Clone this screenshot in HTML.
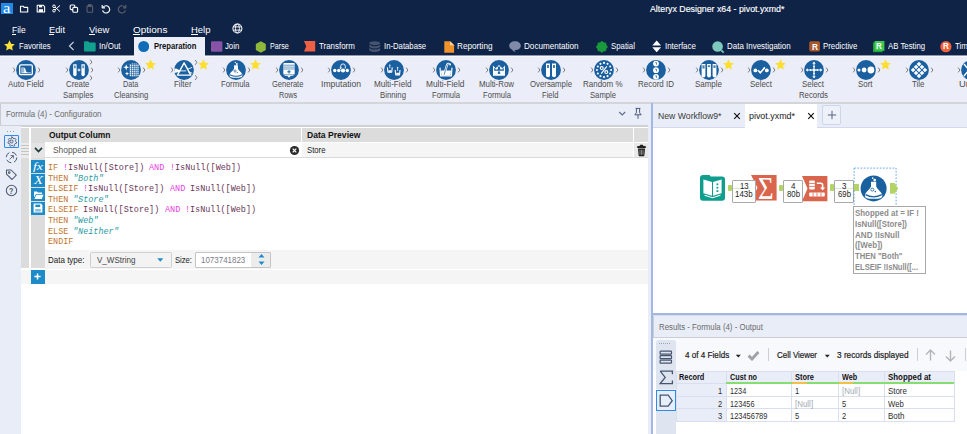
<!DOCTYPE html>
<html lang="en"><head><meta charset="utf-8"><title>Alteryx Designer x64 - pivot.yxmd*</title>
<style>
html,body{margin:0;padding:0;}
body{width:967px;height:434px;overflow:hidden;background:#fff;font-family:'Liberation Sans', sans-serif;}
#app{position:relative;width:967px;height:434px;overflow:hidden;background:#fff;}
#app div,#app svg,#app span.t{position:absolute;}
#app div{box-sizing:border-box;}
span.t{white-space:pre;line-height:1;transform-origin:0 50%;}
</style></head><body><div id="app">
<div style="left:0px;top:0px;width:967px;height:55px;background:#0f2347;"></div>
<div style="left:0px;top:55px;width:967px;height:48px;background:#ebeef9;"></div>
<div style="left:0px;top:55px;width:967px;height:1px;background:#8d97b0;"></div>
<div style="left:0px;top:56px;width:967px;height:1px;background:#f6f8fc;"></div>
<div style="left:134px;top:37px;width:71px;height:20px;background:#ebeef9;"></div>
<div style="left:1px;top:3px;width:12px;height:11px;background:#2389e6;"></div>
<span class="t" style="left:3.40px;top:1.80px;font-size:14px;color:#fff;font-family:'Liberation Serif', serif;transform:scaleX(1.1899);">a</span>
<svg style="left:19px;top:4px;" width="10" height="9" viewBox="0 0 10 9"><path d="M1.5 2.2h2.6l1 1.2h3.6v4.6h-7.2z" fill="none" stroke="#fff" stroke-width="1.1" stroke-linejoin="round"/></svg>
<svg style="left:35.5px;top:4px;" width="10" height="9" viewBox="0 0 10 9"><path d="M1.2 1.2h6l1.4 1.4v5.4h-7.4z" fill="none" stroke="#fff" stroke-width="1.1" stroke-linejoin="round"/><rect x="3" y="1.2" width="3.2" height="2.2" fill="#fff"/><rect x="2.8" y="5.2" width="4.2" height="2.8" fill="#fff"/></svg>
<svg style="left:51.5px;top:4px;" width="9" height="9" viewBox="0 0 9 9"><g fill="none" stroke="#fff" stroke-width="1"><circle cx="2" cy="2.3" r="1.3"/><circle cx="2" cy="6.7" r="1.3"/><path d="M3 3.1L8 7.6M3 5.9L8 1.4"/></g></svg>
<svg style="left:68.5px;top:4px;" width="10" height="9" viewBox="0 0 10 9"><g fill="none" stroke="#fff" stroke-width="1.1"><rect x="1.2" y="1" width="4.6" height="4.6" rx="1"/><rect x="3.8" y="3.4" width="4.8" height="4.8" rx="1" fill="#0f2347"/></g></svg>
<svg style="left:85.5px;top:4px;" width="8" height="9" viewBox="0 0 8 9"><g fill="none" stroke="#5d6168" stroke-width="1.1"><rect x="1" y="1.8" width="5.6" height="6.4" rx=".8"/><rect x="2.6" y=".7" width="2.4" height="1.6" fill="#5d6168"/></g></svg>
<svg style="left:100.5px;top:3.5px;" width="10" height="10" viewBox="0 0 10 10"><g fill="none" stroke="#fff" stroke-width="1.15"><path d="M2.2 3.2A3.6 3.6 0 1 1 1.6 6.4"/><path d="M1.2 1v2.8h2.8" stroke-linejoin="round"/></g></svg>
<svg style="left:117px;top:3.5px;" width="10" height="10" viewBox="0 0 10 10"><g fill="none" stroke="#5d6168" stroke-width="1.15"><path d="M7.8 3.2A3.6 3.6 0 1 0 8.4 6.4"/><path d="M8.8 1v2.8h-2.8" stroke-linejoin="round"/></g></svg>
<span class="t" style="left:649.60px;top:4.10px;font-size:9.4px;color:#fff;transform:scaleX(0.9380);-webkit-text-stroke:.15px #fff;">Alteryx Designer x64 - pivot.yxmd*</span>
<span class="t" style="left:11.80px;top:25.00px;font-size:9.6px;color:#fff;transform:scaleX(0.8857);">File</span>
<div style="left:11.8px;top:34px;width:4.2px;height:1px;background:#fff;"></div>
<span class="t" style="left:49.00px;top:25.00px;font-size:9.6px;color:#fff;transform:scaleX(0.9669);">Edit</span>
<div style="left:49px;top:34px;width:4.6px;height:1px;background:#fff;"></div>
<span class="t" style="left:88.70px;top:25.00px;font-size:9.6px;color:#fff;transform:scaleX(0.9794);">View</span>
<div style="left:88.7px;top:34px;width:6px;height:1px;background:#fff;"></div>
<span class="t" style="left:133.00px;top:25.00px;font-size:9.6px;color:#fff;transform:scaleX(1.0400);">Options</span>
<div style="left:133px;top:34px;width:7px;height:1px;background:#fff;"></div>
<span class="t" style="left:191.20px;top:25.00px;font-size:9.6px;color:#fff;transform:scaleX(0.9831);">Help</span>
<div style="left:191.2px;top:34px;width:6.4px;height:1px;background:#fff;"></div>
<svg style="left:231.5px;top:23px;" width="11" height="11" viewBox="0 0 11 11"><g fill="none" stroke="#fff" stroke-width="1.05"><circle cx="5.4" cy="5.5" r="4.5"/><ellipse cx="5.4" cy="5.5" rx="2" ry="4.5" stroke-width=".9"/><path d="M1.3 3.9h8.2M1.3 7.1h8.200" stroke-width=".9"/></g></svg>
<svg style="left:4px;top:40px;" width="11" height="11" viewBox="0 0 11 11"><path d="M5.5 0.3l1.6 3.4 3.7.5-2.7 2.6.7 3.7-3.3-1.8-3.3 1.8.7-3.7L.2 4.2l3.7-.5z" fill="#fbe037"/></svg>
<span class="t" style="left:18.80px;top:41.70px;font-size:9.2px;color:#fff;transform:scaleX(0.8360);">Favorites</span>
<svg style="left:67.5px;top:41px;" width="7" height="10" viewBox="0 0 7 10"><path d="M5.6 1L1.4 5l4.2 4" fill="none" stroke="#c9cfdd" stroke-width="1.1"/></svg>
<svg style="left:84px;top:41px;" width="12" height="11" viewBox="0 0 12 11"><path d="M0 1.2q0-1 1-1h3.2l1.2 1.4h5.3q1 0 1 1v7q0 1-1 1h-9.700q-1 0-1-1z" fill="#12a08f"/></svg>
<span class="t" style="left:98.80px;top:41.70px;font-size:9.2px;color:#fff;transform:scaleX(0.8589);">In/Out</span>
<svg style="left:138px;top:41px;" width="11.4" height="11.4" viewBox="0 0 11.4 11.4"><circle cx="5.7" cy="5.5" r="5.5" fill="#0f6cb7"/></svg>
<span class="t" style="left:153.50px;top:41.70px;font-size:9.2px;color:#101010;font-weight:700;transform:scaleX(0.8304);">Preparation</span>
<svg style="left:210.5px;top:41px;" width="12" height="11" viewBox="0 0 12 11"><rect x="0" y="0.3" width="11.4" height="10.4" rx="1.2" fill="#8653a6"/></svg>
<span class="t" style="left:224.80px;top:41.70px;font-size:9.2px;color:#fff;transform:scaleX(0.8423);">Join</span>
<svg style="left:254.5px;top:40.5px;" width="12" height="12" viewBox="0 0 12 12"><path d="M5.8 .3l5 2.8v5.8l-5 2.8-5-2.800v-5.800z" fill="#8eb83a"/></svg>
<span class="t" style="left:269.60px;top:41.70px;font-size:9.2px;color:#fff;transform:scaleX(0.7828);">Parse</span>
<svg style="left:303.5px;top:41px;" width="12" height="11" viewBox="0 0 12 11"><path d="M0 0h11.200v10.600h-11.200l2.200-5.300z" fill="#ee5f43"/></svg>
<span class="t" style="left:318.50px;top:41.70px;font-size:9.2px;color:#fff;transform:scaleX(0.8620);">Transform</span>
<svg style="left:369px;top:40.5px;" width="12" height="12" viewBox="0 0 12 12"><g fill="#46546f"><ellipse cx="5.700" cy="2.200" rx="5.500" ry="2"/><path d="M.2 3.700q5.500 3 11 0v2.400q-5.500 3-11 0z"/><path d="M.2 7.100q5.500 3 11 0v2.400q-5.500 3-11 0z"/></g></svg>
<span class="t" style="left:383.90px;top:41.70px;font-size:9.2px;color:#fff;transform:scaleX(0.8409);">In-Database</span>
<svg style="left:443.5px;top:40.5px;" width="11" height="12" viewBox="0 0 11 12"><path d="M.3 .3h5.800l4 4v7.400h-9.800z" fill="#f0932d"/><path d="M6.100 .3v4h4z" fill="#fbd9a6"/></svg>
<span class="t" style="left:457.30px;top:41.70px;font-size:9.2px;color:#fff;transform:scaleX(0.8910);">Reporting</span>
<svg style="left:509px;top:41px;" width="13" height="11" viewBox="0 0 13 11"><path d="M6 .3c3.300 0 5.800 1.900 5.800 4.400s-2.500 4.400-5.800 4.400l-.6 0 1.300 1.700c-2.500-.2-3.300-1.300-3.600-2.200c-1.700-.800-2.900-2.200-2.900-3.900c0-2.500 2.500-4.400 5.800-4.400z" fill="#7f8ba8"/></svg>
<span class="t" style="left:524.10px;top:41.70px;font-size:9.2px;color:#fff;transform:scaleX(0.8835);">Documentation</span>
<svg style="left:595.5px;top:40.5px;" width="12" height="12" viewBox="0 0 12 12"><g fill="#1a983c"><rect x="1.500" y="1.500" width="8.800" height="8.800" rx="1.200"/><rect x="1.500" y="1.500" width="8.800" height="8.800" rx="1.200" transform="rotate(45 5.9 5.9)"/></g></svg>
<span class="t" style="left:610.50px;top:41.70px;font-size:9.2px;color:#fff;transform:scaleX(0.8507);">Spatial</span>
<svg style="left:652px;top:40px;" width="10" height="13" viewBox="0 0 10 13"><path d="M4.700 .5l4.400 5h-8.800z" fill="#fff"/><path d="M4.700 12.300l4.400-5h-8.800z" fill="#fff"/></svg>
<span class="t" style="left:664.80px;top:41.70px;font-size:9.2px;color:#fff;transform:scaleX(0.8643);">Interface</span>
<svg style="left:712px;top:40.5px;" width="13" height="13" viewBox="0 0 13 13"><circle cx="5.600" cy="5.500" r="5.300" fill="#7ec9be"/><path d="M9.300 9.300l2.400 2.400" stroke="#7ec9be" stroke-width="1.700"/></svg>
<span class="t" style="left:727.20px;top:41.70px;font-size:9.2px;color:#fff;transform:scaleX(0.8661);">Data Investigation</span>
<svg style="left:809px;top:41px;" width="12" height="11" viewBox="0 0 12 11"><rect x="0.200" y="0.200" width="10.800" height="10.400" rx="1.800" fill="#a8562a"/></svg>
<span class="t" style="left:811.60px;top:43.70px;font-size:8.2px;color:#fff;font-weight:700;transform:scaleX(1.0132);">R</span>
<span class="t" style="left:823.20px;top:41.70px;font-size:9.2px;color:#fff;transform:scaleX(0.8527);">Predictive</span>
<svg style="left:873px;top:40.5px;" width="12" height="12" viewBox="0 0 12 12"><rect x="0" y="1.400" width="9.600" height="9.800" fill="#1d9e3a"/><rect x="1.600" y="0" width="9.800" height="9.800" fill="#3ccb4e"/></svg>
<span class="t" style="left:876.40px;top:42.70px;font-size:8.2px;color:#fff;font-weight:700;transform:scaleX(0.9794);">R</span>
<span class="t" style="left:887.70px;top:41.70px;font-size:9.2px;color:#fff;transform:scaleX(0.8477);">AB Testing</span>
<svg style="left:940px;top:40.5px;" width="12" height="12" viewBox="0 0 12 12"><circle cx="5.900" cy="5.700" r="5.600" fill="#f0613c"/></svg>
<span class="t" style="left:943.10px;top:42.70px;font-size:8.2px;color:#fff;font-weight:700;transform:scaleX(0.9963);">R</span>
<span class="t" style="left:954.90px;top:41.70px;font-size:9.2px;color:#fff;transform:scaleX(0.8618);">Tim</span>
<svg style="left:8.1px;top:57.5px;" width="40" height="24" viewBox="0 0 40 24"><circle cx="18" cy="12" r="9.900" fill="#1a5f9f"/><g transform="translate(8,2)"><rect x="3.700" y="4.800" width="12.600" height="9.800" rx="1.200" fill="none" stroke="#fff" stroke-width="1.300"/><path d="M5.500 12.600v-5.200h2.200q1.600 0 1.900 2.400t1.600 2.600h3.600v.8h-9.300z" fill="#fff"/><path d="M6.600 7.500v5M7.700 7.500v5" stroke="#1a5f9f" stroke-width=".5"/></g><path d="M5.2 9.6l1.700 2.400-1.700 2.400" fill="none" stroke="#7d7d7d" stroke-width="1"/><path d="M30.2 9.6l1.700 2.400-1.700 2.400" fill="none" stroke="#7d7d7d" stroke-width="1"/></svg>
<span class="t" style="left:7.70px;top:79.70px;font-size:9.2px;color:#4c4c4c;transform:scaleX(0.8653);">Auto Field</span>
<svg style="left:60.6px;top:57.5px;" width="40" height="24" viewBox="0 0 40 24"><circle cx="18" cy="12" r="9.900" fill="#1a5f9f"/><g transform="translate(8,2)"><path d="M4.2 4.200h3.400v10.300a1.700 1.700 0 0 1-3.400 0z" fill="#fff"/><path d="M5.1000000000000005 5.600h1.600v2.600h-1.600z" fill="#1a5f9f" opacity=".75"/><path d="M12.4 4.200h3.400v10.300a1.700 1.700 0 0 1-3.400 0z" fill="#fff"/><path d="M13.3 5.600h1.600v2.600h-1.600z" fill="#1a5f9f" opacity=".75"/><path d="M8.600 10h2.800M10 8.600v2.800" stroke="#fff" stroke-width="1" fill="none"/></g><path d="M5.2 9.6l1.700 2.400-1.700 2.400" fill="none" stroke="#7d7d7d" stroke-width="1"/><path d="M29.2 1.6l1.700 2.400-1.700 2.400" fill="none" stroke="#7d7d7d" stroke-width="1"/><path d="M30.2 9.6l1.700 2.400-1.700 2.400" fill="none" stroke="#7d7d7d" stroke-width="1"/><path d="M29.2 17.6l1.700 2.400-1.700 2.400" fill="none" stroke="#7d7d7d" stroke-width="1"/></svg>
<span class="t" style="left:66.40px;top:79.70px;font-size:9.2px;color:#4c4c4c;transform:scaleX(0.8485);">Create</span>
<span class="t" style="left:62.90px;top:90.70px;font-size:9.2px;color:#4c4c4c;transform:scaleX(0.8503);">Samples</span>
<svg style="left:113.1px;top:57.5px;" width="40" height="24" viewBox="0 0 40 24"><circle cx="18" cy="12" r="9.900" fill="#1a5f9f"/><g transform="translate(8,2)"><path d="M9.4 4.1v12.2" stroke="#fff" stroke-width="1.200"/><path d="M11.3 3.6v13.2" stroke="#fff" stroke-width="1.200"/><path d="M13.2 3.6v13.2" stroke="#fff" stroke-width="1.200"/><path d="M15.1 3.6v13.2" stroke="#fff" stroke-width="1.200"/><path d="M17.0 4.1v12.2" stroke="#fff" stroke-width="1.200"/><path d="M9 4.6h9" stroke="#1a5f9f" stroke-width=".55"/><path d="M9 6.6h9" stroke="#1a5f9f" stroke-width=".55"/><path d="M9 8.6h9" stroke="#1a5f9f" stroke-width=".55"/><path d="M9 10.6h9" stroke="#1a5f9f" stroke-width=".55"/><path d="M9 12.6h9" stroke="#1a5f9f" stroke-width=".55"/><path d="M9 14.6h9" stroke="#1a5f9f" stroke-width=".55"/><path d="M9 16.6h9" stroke="#1a5f9f" stroke-width=".55"/><path d="M5.200 4.200l.8 2.300 2.300.8-2.300.8-.8 2.300-.8-2.300-2.300-.8 2.300-.8z" fill="#fff"/><path d="M6 11.600l.55 1.500 1.500.55-1.500.55-.55 1.500-.55-1.500-1.500-.55 1.500-.55z" fill="#fff"/></g><path d="M5.2 9.6l1.700 2.400-1.700 2.400" fill="none" stroke="#7d7d7d" stroke-width="1"/><path d="M30.2 9.6l1.700 2.400-1.700 2.400" fill="none" stroke="#7d7d7d" stroke-width="1"/></svg>
<svg style="left:145.3px;top:59px;" width="11" height="11" viewBox="0 0 11 11"><path d="M5.5 0.3l1.6 3.4 3.7.5-2.7 2.6.7 3.7-3.3-1.8-3.3 1.8.7-3.7L.2 4.2l3.7-.5z" fill="#fbde2e"/></svg>
<span class="t" style="left:123.00px;top:79.70px;font-size:9.2px;color:#4c4c4c;transform:scaleX(0.7826);">Data</span>
<span class="t" style="left:113.50px;top:90.70px;font-size:9.2px;color:#4c4c4c;transform:scaleX(0.8370);">Cleansing</span>
<svg style="left:165.6px;top:57.5px;" width="40" height="24" viewBox="0 0 40 24"><circle cx="18" cy="12" r="9.900" fill="#1a5f9f"/><g transform="translate(8,2)"><path d="M10.100 2.800l6.700 12.300h-13.400z" fill="none" stroke="#fff" stroke-width="1.400" stroke-linejoin="round"/><path d="M.3 8.600l2.400.1 3 1.500v1.500l-3 .9-2.400.4z" fill="#fff"/><path d="M5.600 10.900h6.600M13.200 9.300l5-1.900M14 11.700l4.300 1.500" stroke="#fff" stroke-width=".9"/></g><path d="M5.2 9.6l1.700 2.400-1.700 2.400" fill="none" stroke="#7d7d7d" stroke-width="1"/><path d="M29.2 2.0000000000000004l1.700 2.400-1.700 2.400" fill="none" stroke="#7d7d7d" stroke-width="1"/><path d="M29.2 17.200000000000003l1.700 2.400-1.700 2.400" fill="none" stroke="#7d7d7d" stroke-width="1"/></svg>
<svg style="left:197.8px;top:59px;" width="11" height="11" viewBox="0 0 11 11"><path d="M5.5 0.3l1.6 3.4 3.7.5-2.7 2.6.7 3.7-3.3-1.8-3.3 1.8.7-3.7L.2 4.2l3.7-.5z" fill="#fbde2e"/></svg>
<span class="t" style="left:174.30px;top:79.70px;font-size:9.2px;color:#4c4c4c;transform:scaleX(0.8618);">Filter</span>
<svg style="left:218.1px;top:57.5px;" width="40" height="24" viewBox="0 0 40 24"><circle cx="18" cy="12" r="9.900" fill="#1a5f9f"/><g transform="translate(8,2)"><g transform="translate(10,10.100) scale(.74)"><path d="M-2.600 -6.600h5.200v4.600C3.600 1 8.700 3.800 8.700 7C8.700 9.600 6 10.400 0 10.400C-6 10.400 -8.700 9.600 -8.700 7C-8.700 3.800 -3.600 1 -2.600 -2z" fill="#fff"/><path d="M-7.900 5.700q7.900 4.200 15.800 0l.5 1.100q-8.400 4.400-16.800 0z" fill="#1a5f9f"/><circle cx="-1.300" cy="1.200" r="1.500" fill="none" stroke="#1a5f9f" stroke-width=".9"/><circle cx="1.700" cy="3.200" r=".8" fill="#1a5f9f"/><circle cx="1.100" cy="-8.300" r="1.300" fill="#fff"/><circle cx="-.9" cy="-10.300" r=".85" fill="#fff"/></g></g><path d="M5.2 9.6l1.700 2.400-1.700 2.400" fill="none" stroke="#7d7d7d" stroke-width="1"/><path d="M30.2 9.6l1.700 2.400-1.700 2.400" fill="none" stroke="#7d7d7d" stroke-width="1"/></svg>
<svg style="left:250.3px;top:59px;" width="11" height="11" viewBox="0 0 11 11"><path d="M5.5 0.3l1.6 3.4 3.7.5-2.7 2.6.7 3.7-3.3-1.8-3.3 1.8.7-3.7L.2 4.2l3.7-.5z" fill="#fbde2e"/></svg>
<span class="t" style="left:221.30px;top:79.70px;font-size:9.2px;color:#4c4c4c;transform:scaleX(0.8486);">Formula</span>
<svg style="left:270.6px;top:57.5px;" width="40" height="24" viewBox="0 0 40 24"><circle cx="18" cy="12" r="9.900" fill="#1a5f9f"/><g transform="translate(8,2)"><rect x="4.300" y="3" width="11.400" height="11.600" rx=".9" fill="#fff"/><path d="M4.300 5.200h11.400M4.300 7.100h11.400M4.300 9h11.400" stroke="#1a5f9f" stroke-width=".65"/><path d="M8.300 11.800h3.400M10 10.100v3.400" stroke="#1a5f9f" stroke-width="1"/><path d="M7.900 15.400h4.200l-2.100 2.300z" fill="#fff"/><path d="M5.600 15.400h8.800" stroke="#fff" stroke-width=".8"/></g><path d="M5.2 9.6l1.700 2.400-1.700 2.400" fill="none" stroke="#7d7d7d" stroke-width="1"/><path d="M30.2 9.6l1.700 2.400-1.700 2.400" fill="none" stroke="#7d7d7d" stroke-width="1"/></svg>
<span class="t" style="left:272.40px;top:79.70px;font-size:9.2px;color:#4c4c4c;transform:scaleX(0.8196);">Generate</span>
<span class="t" style="left:279.10px;top:90.70px;font-size:9.2px;color:#4c4c4c;transform:scaleX(0.7831);">Rows</span>
<svg style="left:323.1px;top:57.5px;" width="40" height="24" viewBox="0 0 40 24"><circle cx="18" cy="12" r="9.900" fill="#1a5f9f"/><g transform="translate(8,2)"><circle cx="3.800" cy="10.500" r="1.700" fill="#fff"/><circle cx="7.800" cy="10.500" r="1.700" fill="#fff"/><circle cx="12" cy="10.500" r="2.100" fill="#fff"/><circle cx="16.300" cy="10.500" r="1.700" fill="#fff"/><path d="M9.700 8.600v-2.400a2.300 2.300 0 0 1 4.600 0v2.400" fill="none" stroke="#fff" stroke-width=".9"/><path d="M8.500 7.600l1.200 1.700 1.200-1.700z" fill="#fff"/></g><path d="M5.2 9.6l1.700 2.400-1.700 2.400" fill="none" stroke="#7d7d7d" stroke-width="1"/><path d="M30.2 9.6l1.700 2.400-1.700 2.400" fill="none" stroke="#7d7d7d" stroke-width="1"/></svg>
<span class="t" style="left:320.60px;top:79.70px;font-size:9.2px;color:#4c4c4c;transform:scaleX(0.9323);">Imputation</span>
<svg style="left:375.6px;top:57.5px;" width="40" height="24" viewBox="0 0 40 24"><circle cx="18" cy="12" r="9.900" fill="#1a5f9f"/><g transform="translate(8,2)"><path d="M3.4 7.4l0.525 4.83h3.7800000000000002l0.525-4.83" fill="none" stroke="#fff" stroke-width="1.100" stroke-linejoin="round"/><path d="M4.345 10.13h2.94l-0.315 2.1h-2.3100000000000005z" fill="#fff"/><path d="M5.8149999999999995 5.09v3.1500000000000004" stroke="#fff" stroke-width=".8"/><path d="M4.765000000000001 5.51l1.05-1.26 1.05 1.26z" fill="#fff"/><path d="M11.2 10l0.525 4.83h3.7800000000000002l0.525-4.83" fill="none" stroke="#fff" stroke-width="1.100" stroke-linejoin="round"/><path d="M12.145 12.73h2.94l-0.315 2.1h-2.3100000000000005z" fill="#fff"/><path d="M13.614999999999998 7.6899999999999995v3.1500000000000004" stroke="#fff" stroke-width=".8"/><path d="M12.565 8.11l1.05-1.26 1.05 1.26z" fill="#fff"/></g><path d="M5.2 9.6l1.700 2.400-1.700 2.400" fill="none" stroke="#7d7d7d" stroke-width="1"/><path d="M30.2 9.6l1.700 2.400-1.700 2.400" fill="none" stroke="#7d7d7d" stroke-width="1"/></svg>
<span class="t" style="left:374.35px;top:79.70px;font-size:9.2px;color:#4c4c4c;transform:scaleX(0.8850);">Multi-Field</span>
<span class="t" style="left:380.10px;top:90.70px;font-size:9.2px;color:#4c4c4c;transform:scaleX(0.8481);">Binning</span>
<svg style="left:428.1px;top:57.5px;" width="40" height="24" viewBox="0 0 40 24"><circle cx="18" cy="12" r="9.900" fill="#1a5f9f"/><g transform="translate(8,2)"><path d="M4 7.600l.6 8.200h10.800l.6-8.200" fill="none" stroke="#fff" stroke-width="1.200"/><path d="M5 10.500h10l-.4 5h-9.200z" fill="#fff"/><path d="M8.200 14.400l2.600-8.800q.8-2.400 2.600-1.600l.6.500" fill="none" stroke="#fff" stroke-width="2.100" stroke-linecap="round"/><path d="M8.200 14.400l2.600-8.800q.8-2.400 2.600-1.600" fill="none" stroke="#1a5f9f" stroke-width=".7" stroke-linecap="round"/></g><path d="M5.2 9.6l1.700 2.400-1.700 2.400" fill="none" stroke="#7d7d7d" stroke-width="1"/><path d="M30.2 9.6l1.700 2.400-1.700 2.400" fill="none" stroke="#7d7d7d" stroke-width="1"/></svg>
<span class="t" style="left:426.35px;top:79.70px;font-size:9.2px;color:#4c4c4c;transform:scaleX(0.9086);">Multi-Field</span>
<span class="t" style="left:431.60px;top:90.70px;font-size:9.2px;color:#4c4c4c;transform:scaleX(0.8308);">Formula</span>
<svg style="left:480.6px;top:57.5px;" width="40" height="24" viewBox="0 0 40 24"><circle cx="18" cy="12" r="9.900" fill="#1a5f9f"/><g transform="translate(8,2)"><path d="M4 15.800v-10.400l3 3.400 3-4 3 4 3-3.400v10.400z" fill="#fff"/><path d="M5.200 10.800v-3l1.800 2 3-3.900 3 3.900 1.800-2v3z" fill="#1a5f9f"/><path d="M8 6.600l.9 1.600a.95.95 0 1 1-1.800 0zM12 6.600l.9 1.600a.95.95 0 1 1-1.800 0z" fill="#fff"/><path d="M10 10.400l1.100 2a1.200 1.200 0 1 1-2.200 0z" fill="#1a5f9f"/></g><path d="M5.2 9.6l1.700 2.400-1.700 2.400" fill="none" stroke="#7d7d7d" stroke-width="1"/><path d="M30.2 9.6l1.700 2.400-1.700 2.400" fill="none" stroke="#7d7d7d" stroke-width="1"/></svg>
<span class="t" style="left:479.10px;top:79.70px;font-size:9.2px;color:#4c4c4c;transform:scaleX(0.8569);">Multi-Row</span>
<span class="t" style="left:482.60px;top:90.70px;font-size:9.2px;color:#4c4c4c;transform:scaleX(0.8308);">Formula</span>
<svg style="left:533.1px;top:57.5px;" width="40" height="24" viewBox="0 0 40 24"><circle cx="18" cy="12" r="9.900" fill="#1a5f9f"/><g transform="translate(8,2)"><path d="M5 3.600h4v11.600a2 2 0 0 1-4 0z" fill="#fff"/><path d="M6 5h2v3h-2z" fill="#1a5f9f" opacity=".8"/><path d="M11 3.600h4v11.600a2 2 0 0 1-4 0z" fill="#fff"/><path d="M12 5h2v3h-2z" fill="#1a5f9f" opacity=".8"/></g><path d="M5.2 9.6l1.700 2.400-1.700 2.400" fill="none" stroke="#7d7d7d" stroke-width="1"/><path d="M30.2 9.6l1.700 2.400-1.700 2.400" fill="none" stroke="#7d7d7d" stroke-width="1"/></svg>
<span class="t" style="left:529.60px;top:79.70px;font-size:9.2px;color:#4c4c4c;transform:scaleX(0.8479);">Oversample</span>
<span class="t" style="left:542.35px;top:90.70px;font-size:9.2px;color:#4c4c4c;transform:scaleX(0.8282);">Field</span>
<svg style="left:585.6px;top:57.5px;" width="40" height="24" viewBox="0 0 40 24"><circle cx="18" cy="12" r="9.900" fill="#1a5f9f"/><g transform="translate(8,2)"><circle cx="17.10" cy="10.00" r="1.050" fill="#fff"/><circle cx="16.15" cy="13.55" r="1.050" fill="#fff"/><circle cx="13.55" cy="16.15" r="1.050" fill="#fff"/><circle cx="10.00" cy="17.10" r="1.050" fill="#fff"/><circle cx="6.45" cy="16.15" r="1.050" fill="#fff"/><circle cx="3.85" cy="13.55" r="1.050" fill="#fff"/><circle cx="2.90" cy="10.00" r="1.050" fill="#fff"/><circle cx="3.85" cy="6.45" r="1.050" fill="#fff"/><circle cx="6.45" cy="3.85" r="1.050" fill="#fff"/><circle cx="10.00" cy="2.90" r="1.050" fill="#fff"/><circle cx="13.55" cy="3.85" r="1.050" fill="#fff"/><circle cx="16.15" cy="6.45" r="1.050" fill="#fff"/><g stroke="#fff" fill="none" stroke-width="1.150"><circle cx="7.700" cy="8" r="1.450"/><circle cx="12.300" cy="12" r="1.450"/><path d="M12.800 6.400l-5.600 7.200"/></g></g><path d="M5.2 9.6l1.700 2.400-1.700 2.400" fill="none" stroke="#7d7d7d" stroke-width="1"/><path d="M30.2 9.6l1.700 2.400-1.700 2.400" fill="none" stroke="#7d7d7d" stroke-width="1"/></svg>
<span class="t" style="left:583.35px;top:79.70px;font-size:9.2px;color:#4c4c4c;transform:scaleX(0.8690);">Random %</span>
<span class="t" style="left:590.10px;top:90.70px;font-size:9.2px;color:#4c4c4c;transform:scaleX(0.8345);">Sample</span>
<svg style="left:638.1px;top:57.5px;" width="40" height="24" viewBox="0 0 40 24"><circle cx="18" cy="12" r="9.900" fill="#1a5f9f"/><g transform="translate(8,2)"><circle cx="10" cy="3.6" r="2.900" fill="#fff"/><path d="M9.200 2.7h1.300v2" stroke="#1a5f9f" stroke-width=".7" fill="none"/><circle cx="10" cy="10.2" r="2.900" fill="#fff"/><path d="M9.200 9.3h1.300v2" stroke="#1a5f9f" stroke-width=".7" fill="none"/><circle cx="10" cy="16.8" r="2.900" fill="#fff"/><path d="M9.200 15.899999999999999h1.300v2" stroke="#1a5f9f" stroke-width=".7" fill="none"/></g><path d="M5.2 9.6l1.700 2.400-1.700 2.400" fill="none" stroke="#7d7d7d" stroke-width="1"/><path d="M30.2 9.6l1.700 2.400-1.700 2.400" fill="none" stroke="#7d7d7d" stroke-width="1"/></svg>
<span class="t" style="left:637.60px;top:79.70px;font-size:9.2px;color:#4c4c4c;transform:scaleX(0.8704);">Record ID</span>
<svg style="left:690.6px;top:57.5px;" width="40" height="24" viewBox="0 0 40 24"><circle cx="18" cy="12" r="9.900" fill="#1a5f9f"/><g transform="translate(8,2)"><path d="M2.6 4h3.800v11.600a1.900 1.900 0 0 1-3.800 0z" fill="#fff"/><path d="M3.4000000000000004 5.300h2.200v3.2h-2.200z" fill="#1a5f9f" opacity=".8"/><path d="M8.1 4h3.800v11.600a1.900 1.900 0 0 1-3.800 0z" fill="#fff"/><path d="M8.9 5.300h2.200v1.8h-2.200z" fill="#1a5f9f" opacity=".8"/><path d="M13.6 4h3.800v11.600a1.900 1.900 0 0 1-3.800 0z" fill="#fff"/><path d="M14.4 5.300h2.200v2.6h-2.200z" fill="#1a5f9f" opacity=".8"/></g><path d="M5.2 9.6l1.700 2.400-1.700 2.400" fill="none" stroke="#7d7d7d" stroke-width="1"/><path d="M30.2 9.6l1.700 2.400-1.700 2.400" fill="none" stroke="#7d7d7d" stroke-width="1"/></svg>
<svg style="left:722.8px;top:59px;" width="11" height="11" viewBox="0 0 11 11"><path d="M5.5 0.3l1.6 3.4 3.7.5-2.7 2.6.7 3.7-3.3-1.8-3.3 1.8.7-3.7L.2 4.2l3.7-.5z" fill="#fbde2e"/></svg>
<span class="t" style="left:694.60px;top:79.70px;font-size:9.2px;color:#4c4c4c;transform:scaleX(0.8666);">Sample</span>
<svg style="left:743.1px;top:57.5px;" width="40" height="24" viewBox="0 0 40 24"><circle cx="18" cy="12" r="9.900" fill="#1a5f9f"/><g transform="translate(8,2)"><circle cx="4.400" cy="10.400" r="1.900" fill="#fff"/><circle cx="15.800" cy="10.400" r="1.900" fill="#fff"/><path d="M7 10.200l2.300 2.600 4.600-5.400" fill="none" stroke="#fff" stroke-width="1.700"/></g><path d="M5.2 9.6l1.700 2.400-1.700 2.400" fill="none" stroke="#7d7d7d" stroke-width="1"/><path d="M30.2 9.6l1.700 2.400-1.700 2.400" fill="none" stroke="#7d7d7d" stroke-width="1"/></svg>
<svg style="left:775.3px;top:59px;" width="11" height="11" viewBox="0 0 11 11"><path d="M5.5 0.3l1.6 3.4 3.7.5-2.7 2.6.7 3.7-3.3-1.8-3.3 1.8.7-3.7L.2 4.2l3.7-.5z" fill="#fbde2e"/></svg>
<span class="t" style="left:749.60px;top:79.70px;font-size:9.2px;color:#4c4c4c;transform:scaleX(0.8612);">Select</span>
<svg style="left:795.6px;top:57.5px;" width="40" height="24" viewBox="0 0 40 24"><circle cx="18" cy="12" r="9.900" fill="#1a5f9f"/><g transform="translate(8,2)"><path d="M10 3v14M3 10h14" stroke="#fff" stroke-width="1"/><path d="M10 1.600l1.700 2.200h-3.400zM10 18.400l1.700-2.200h-3.400zM1.600 10l2.200-1.700v3.400zM18.400 10l-2.200-1.700v3.400z" fill="#fff"/><circle cx="10" cy="10" r="1.500" fill="#fff"/><circle cx="6.600" cy="10" r=".9" fill="#fff"/><circle cx="13.400" cy="10" r=".9" fill="#fff"/><circle cx="10" cy="6.600" r=".9" fill="#fff"/><circle cx="10" cy="13.400" r=".9" fill="#fff"/></g><path d="M5.2 9.6l1.700 2.400-1.700 2.400" fill="none" stroke="#7d7d7d" stroke-width="1"/><path d="M30.2 9.6l1.700 2.400-1.700 2.400" fill="none" stroke="#7d7d7d" stroke-width="1"/></svg>
<span class="t" style="left:802.10px;top:79.70px;font-size:9.2px;color:#4c4c4c;transform:scaleX(0.8612);">Select</span>
<span class="t" style="left:798.60px;top:90.70px;font-size:9.2px;color:#4c4c4c;transform:scaleX(0.8475);">Records</span>
<svg style="left:848.1px;top:57.5px;" width="40" height="24" viewBox="0 0 40 24"><circle cx="18" cy="12" r="9.900" fill="#1a5f9f"/><g transform="translate(8,2)"><circle cx="3" cy="10" r="1.500" fill="#fff"/><circle cx="8.100" cy="10" r="2.400" fill="#fff"/><circle cx="14.900" cy="10" r="3.400" fill="#fff"/></g><path d="M5.2 9.6l1.700 2.400-1.700 2.400" fill="none" stroke="#7d7d7d" stroke-width="1"/><path d="M30.2 9.6l1.700 2.400-1.700 2.400" fill="none" stroke="#7d7d7d" stroke-width="1"/></svg>
<svg style="left:880.3px;top:59px;" width="11" height="11" viewBox="0 0 11 11"><path d="M5.5 0.3l1.6 3.4 3.7.5-2.7 2.6.7 3.7-3.3-1.8-3.3 1.8.7-3.7L.2 4.2l3.7-.5z" fill="#fbde2e"/></svg>
<span class="t" style="left:858.35px;top:79.70px;font-size:9.2px;color:#4c4c4c;transform:scaleX(0.8601);">Sort</span>
<svg style="left:900.6px;top:57.5px;" width="40" height="24" viewBox="0 0 40 24"><circle cx="18" cy="12" r="9.900" fill="#1a5f9f"/><g transform="translate(8,2)"><path d="M10.00 1.80l2.300 2.300-2.300 2.300-2.300-2.300z" fill="#fff"/><path d="M7.05 4.75l2.300 2.300-2.300 2.300-2.300-2.300z" fill="#fff"/><path d="M4.10 7.70l2.300 2.300-2.300 2.300-2.300-2.300z" fill="#fff"/><path d="M12.95 4.75l2.300 2.300-2.300 2.300-2.300-2.300z" fill="#fff"/><path d="M10.00 7.70l2.300 2.300-2.300 2.300-2.300-2.300z" fill="#fff"/><path d="M7.05 10.65l2.300 2.300-2.300 2.300-2.300-2.300z" fill="#fff"/><path d="M15.90 7.70l2.300 2.300-2.300 2.300-2.300-2.300z" fill="#fff"/><path d="M12.95 10.65l2.300 2.300-2.300 2.300-2.300-2.300z" fill="#fff"/><path d="M10.00 13.60l2.300 2.300-2.300 2.300-2.300-2.300z" fill="#fff"/></g><path d="M5.2 9.6l1.700 2.400-1.700 2.400" fill="none" stroke="#7d7d7d" stroke-width="1"/><path d="M30.2 9.6l1.700 2.400-1.700 2.400" fill="none" stroke="#7d7d7d" stroke-width="1"/></svg>
<span class="t" style="left:911.85px;top:79.70px;font-size:9.2px;color:#4c4c4c;transform:scaleX(0.8639);">Tile</span>
<svg style="left:953.1px;top:57.5px;" width="40" height="24" viewBox="0 0 40 24"><circle cx="18" cy="12" r="9.900" fill="#1a5f9f"/><g transform="translate(8,2)"><path d="M3 4l5 6-5 6M7 4l5 6-5 6" fill="none" stroke="#fff" stroke-width="1.400"/></g><path d="M5.2 9.6l1.700 2.400-1.700 2.400" fill="none" stroke="#7d7d7d" stroke-width="1"/><path d="M30.2 9.6l1.700 2.400-1.700 2.400" fill="none" stroke="#7d7d7d" stroke-width="1"/></svg>
<span class="t" style="left:958.60px;top:79.70px;font-size:9.2px;color:#4c4c4c;transform:scaleX(1.0213);">Un</span>
<div style="left:0px;top:102.4px;width:967px;height:1.6px;background:#d4d5d9;"></div>
<div style="left:0px;top:104px;width:648px;height:330px;background:#ffffff;"></div>
<div style="left:0px;top:104px;width:650px;height:21px;background:#e9edf8;border-left:1.5px solid #c9cacd;border-right:1px solid #cfd0d4;"></div>
<div style="left:0px;top:125px;width:650px;height:1.5px;background:#d0d1d4;"></div>
<span class="t" style="left:6.00px;top:109.70px;font-size:9.2px;color:#6a6a6a;transform:scaleX(0.8658);">Formula (4) - Configuration</span>
<svg style="left:618px;top:110px;" width="9" height="8" viewBox="0 0 9 8"><path d="M1.200 2l3 3 3-3" fill="none" stroke="#5a6b8a" stroke-width="1.100"/></svg>
<svg style="left:633px;top:106.5px;" width="10" height="14" viewBox="0 0 10 14"><g fill="none" stroke="#4a5b7d" stroke-width="1"><path d="M2.600 1.400h4.800M3.400 1.400v4.400l-1.600 2h6.400l-1.600-2v-4.400M5 7.800v4"/></g></svg>
<div style="left:0px;top:126px;width:20.5px;height:308px;background:#e9edf8;"></div>
<div style="left:7px;top:130.5px;width:1.2px;height:1px;background:#9a9a9a;"></div>
<div style="left:10px;top:130.5px;width:1.2px;height:1px;background:#9a9a9a;"></div>
<div style="left:13px;top:130.5px;width:1.2px;height:1px;background:#9a9a9a;"></div>
<div style="left:3.8px;top:134.6px;width:15.4px;height:13.8px;background:#e3ebfa;border:1px solid #2f8be6;border-radius:1px;"></div>
<svg style="left:5.9px;top:136px;" width="11" height="11" viewBox="0 0 11 11"><g fill="none" stroke="#4d5b70" stroke-width="1"><circle cx="5.500" cy="5.500" r="1.500"/><path d="M5.500 .8l1 .2.400 1.200 1.100.600 1.200-.400.800 1-.600 1.100.300 1 .9.600-.300 1.300-1.200.200-.600.900.300 1.200-1.100.600-.9-.800h-1.100l-.9.800-1.100-.600.300-1.200-.600-.9-1.200-.200-.300-1.300.9-.600.300-1-.600-1.100.800-1 1.200.400 1.100-.600.400-1.200z" stroke-width=".9"/></g></svg>
<svg style="left:4.9px;top:151px;" width="13" height="13" viewBox="0 0 13 13"><g fill="none" stroke="#4d5b70" stroke-width="1"><circle cx="6.500" cy="6.500" r="5.300" stroke-dasharray="5.500 2.800"/><path d="M4.600 8.400l3.600-3.600M5.600 4.600h2.800v2.800" stroke-width=".9"/></g></svg>
<svg style="left:5px;top:167.7px;" width="13" height="13" viewBox="0 0 13 13"><g fill="none" stroke="#4d5b70" stroke-width="1.050"><path d="M1.500 2h4.600l5.200 5.200-4.300 4.300-5.500-5.300z" stroke-linejoin="round"/><circle cx="4.200" cy="4.600" r=".8"/></g></svg>
<svg style="left:4.9px;top:184.2px;" width="13" height="13" viewBox="0 0 13 13"><circle cx="6.500" cy="6.500" r="5.200" fill="none" stroke="#4d5b70" stroke-width="1.050"/></svg>
<span class="t" style="left:9.20px;top:187.05px;font-size:8.5px;color:#4d5b70;font-weight:700;transform:scaleX(0.8264);">?</span>
<div style="left:21px;top:127.5px;width:8px;height:140px;background:#dcdcdc;"></div>
<div style="left:31px;top:127.5px;width:13.5px;height:140px;background:#dcdcdc;"></div>
<div style="left:45px;top:127.5px;width:256px;height:14px;background:#dcdcdc;"></div>
<div style="left:302px;top:127.5px;width:331px;height:14px;background:#dcdcdc;"></div>
<div style="left:634px;top:127.5px;width:14px;height:14px;background:#dcdcdc;"></div>
<span class="t" style="left:49.00px;top:130.70px;font-size:9.2px;color:#111;font-weight:700;transform:scaleX(0.9198);">Output Column</span>
<span class="t" style="left:307.00px;top:130.70px;font-size:9.2px;color:#111;font-weight:700;transform:scaleX(0.9353);">Data Preview</span>
<div style="left:21px;top:142.5px;width:8px;height:15px;background:#ebebeb;"></div>
<div style="left:21px;top:144.6px;width:8px;height:1.3px;background:#c4c4c4;"></div>
<div style="left:21px;top:147.6px;width:8px;height:1.3px;background:#c4c4c4;"></div>
<div style="left:21px;top:150.6px;width:8px;height:1.3px;background:#c4c4c4;"></div>
<div style="left:21px;top:153.6px;width:8px;height:1.3px;background:#c4c4c4;"></div>
<div style="left:31px;top:142.5px;width:13.5px;height:15px;background:#e4e4e4;"></div>
<svg style="left:32.5px;top:145px;" width="11" height="10" viewBox="0 0 11 10"><path d="M2 2.800l3.500 3.700 3.500-3.700" fill="none" stroke="#1f3a3a" stroke-width="1.700"/></svg>
<div style="left:45px;top:142.5px;width:256px;height:14px;background:#ffffff;"></div>
<div style="left:302px;top:142.5px;width:331px;height:14px;background:#f5f5f5;"></div>
<div style="left:634px;top:142.5px;width:14px;height:14px;background:#e8e8e8;"></div>
<div style="left:45px;top:156.5px;width:603px;height:1.5px;background:#dadada;"></div>
<span class="t" style="left:53.00px;top:145.70px;font-size:9.2px;color:#555;transform:scaleX(0.9146);">Shopped at</span>
<span class="t" style="left:307.00px;top:145.70px;font-size:9.2px;color:#222;transform:scaleX(0.8421);">Store</span>
<svg style="left:289px;top:145px;" width="11" height="11" viewBox="0 0 11 11"><circle cx="5.500" cy="5.500" r="4.600" fill="#2b2b2b"/><path d="M3.700 3.700l3.600 3.600M7.300 3.700l-3.600 3.600" stroke="#fff" stroke-width="1.200"/></svg>
<svg style="left:635.5px;top:143.5px;" width="11" height="13" viewBox="0 0 11 13"><g fill="#222"><rect x="3.800" y=".8" width="3.400" height="1.600" rx=".5"/><rect x="1.200" y="2" width="8.600" height="2" rx=".6"/><path d="M2 4.600h7l-.6 7q-.1.700-.9.700h-4q-.8 0-.9-.7z"/></g><path d="M4 5.800v5M5.500 5.800v5M7 5.800v5" stroke="#e8e8e8" stroke-width=".5"/></svg>
<div style="left:31px;top:159.5px;width:13.5px;height:13px;background:#1c8bc8;"></div>
<div style="left:31px;top:173.5px;width:13.5px;height:13px;background:#1c8bc8;"></div>
<div style="left:31px;top:187.5px;width:13.5px;height:13px;background:#1c8bc8;"></div>
<div style="left:31px;top:201.5px;width:13.5px;height:13px;background:#1c8bc8;"></div>
<span class="t" style="left:32.60px;top:161.55px;font-size:10.5px;color:#fff;font-family:'Liberation Serif', serif;font-style:italic;transform:scaleX(1.3196);">fx</span>
<span class="t" style="left:33.50px;top:174.30px;font-size:12px;color:#fff;font-family:'Liberation Serif', serif;font-style:italic;transform:scaleX(1.2255);">X</span>
<svg style="left:32.5px;top:189.5px;" width="11" height="10" viewBox="0 0 11 10"><path d="M1 1.600h3l.8 1h4.200v1.400h-6l-2 3.600z" fill="#fff"/><path d="M3.400 4.800h7.200l-1.800 4.200h-7.400z" fill="#fff"/></svg>
<svg style="left:33px;top:203px;" width="10" height="10" viewBox="0 0 10 10"><path d="M.6 .6h7.400l1.400 1.400v7.400h-8.800z" fill="#fff"/><rect x="2.400" y="1.600" width="4.800" height="2.400" fill="#1c8bc8"/><rect x="2.200" y="6" width="5.600" height="2.600" fill="#1c8bc8" opacity=".55"/></svg>
<span class="t" style="left:47.60px;top:164.05px;font-size:8.5px;color:#bf7630;font-family:'Liberation Mono', monospace;transform:scaleX(0.9968);">IF</span>
<span class="t" style="left:62.86px;top:164.05px;font-size:8.5px;color:#e63ee0;font-family:'Liberation Mono', monospace;transform:scaleX(0.9952);">!</span>
<span class="t" style="left:67.94px;top:164.05px;font-size:8.5px;color:#6b3557;font-family:'Liberation Mono', monospace;transform:scaleX(0.9969);">IsNull([Store])</span>
<span class="t" style="left:149.30px;top:164.05px;font-size:8.5px;color:#e63ee0;font-family:'Liberation Mono', monospace;transform:scaleX(0.9962);">AND</span>
<span class="t" style="left:169.64px;top:164.05px;font-size:8.5px;color:#e63ee0;font-family:'Liberation Mono', monospace;transform:scaleX(0.9952);">!</span>
<span class="t" style="left:174.72px;top:164.05px;font-size:8.5px;color:#6b3557;font-family:'Liberation Mono', monospace;transform:scaleX(0.9969);">IsNull([Web])</span>
<span class="t" style="left:47.60px;top:175.05px;font-size:8.5px;color:#bf7630;font-family:'Liberation Mono', monospace;transform:scaleX(0.9968);">THEN</span>
<span class="t" style="left:73.03px;top:175.05px;font-size:8.5px;color:#2b9aa3;font-family:'Liberation Mono', monospace;font-style:italic;transform:scaleX(0.9968);">"Both"</span>
<span class="t" style="left:47.60px;top:185.05px;font-size:8.5px;color:#bf7630;font-family:'Liberation Mono', monospace;transform:scaleX(0.9968);">ELSEIF</span>
<span class="t" style="left:83.19px;top:185.05px;font-size:8.5px;color:#e63ee0;font-family:'Liberation Mono', monospace;transform:scaleX(0.9952);">!</span>
<span class="t" style="left:88.28px;top:185.05px;font-size:8.5px;color:#6b3557;font-family:'Liberation Mono', monospace;transform:scaleX(0.9969);">IsNull([Store])</span>
<span class="t" style="left:169.64px;top:185.05px;font-size:8.5px;color:#e63ee0;font-family:'Liberation Mono', monospace;transform:scaleX(0.9962);">AND</span>
<span class="t" style="left:189.98px;top:185.05px;font-size:8.5px;color:#6b3557;font-family:'Liberation Mono', monospace;transform:scaleX(0.9969);">IsNull([Web])</span>
<span class="t" style="left:47.60px;top:196.05px;font-size:8.5px;color:#bf7630;font-family:'Liberation Mono', monospace;transform:scaleX(0.9968);">THEN</span>
<span class="t" style="left:73.03px;top:196.05px;font-size:8.5px;color:#2b9aa3;font-family:'Liberation Mono', monospace;font-style:italic;transform:scaleX(0.9965);">"Store"</span>
<span class="t" style="left:47.60px;top:206.05px;font-size:8.5px;color:#bf7630;font-family:'Liberation Mono', monospace;transform:scaleX(0.9968);">ELSEIF</span>
<span class="t" style="left:83.19px;top:206.05px;font-size:8.5px;color:#6b3557;font-family:'Liberation Mono', monospace;transform:scaleX(0.9969);">IsNull([Store])</span>
<span class="t" style="left:164.56px;top:206.05px;font-size:8.5px;color:#e63ee0;font-family:'Liberation Mono', monospace;transform:scaleX(0.9962);">AND</span>
<span class="t" style="left:184.89px;top:206.05px;font-size:8.5px;color:#e63ee0;font-family:'Liberation Mono', monospace;transform:scaleX(0.9952);">!</span>
<span class="t" style="left:189.98px;top:206.05px;font-size:8.5px;color:#6b3557;font-family:'Liberation Mono', monospace;transform:scaleX(0.9969);">IsNull([Web])</span>
<span class="t" style="left:47.60px;top:217.05px;font-size:8.5px;color:#bf7630;font-family:'Liberation Mono', monospace;transform:scaleX(0.9968);">THEN</span>
<span class="t" style="left:73.03px;top:217.05px;font-size:8.5px;color:#2b9aa3;font-family:'Liberation Mono', monospace;font-style:italic;transform:scaleX(0.9964);">"Web"</span>
<span class="t" style="left:47.60px;top:228.05px;font-size:8.5px;color:#bf7630;font-family:'Liberation Mono', monospace;transform:scaleX(0.9968);">ELSE</span>
<span class="t" style="left:73.03px;top:228.05px;font-size:8.5px;color:#2b9aa3;font-family:'Liberation Mono', monospace;font-style:italic;transform:scaleX(0.9966);">"Neither"</span>
<span class="t" style="left:47.60px;top:238.05px;font-size:8.5px;color:#bf7630;font-family:'Liberation Mono', monospace;transform:scaleX(0.9964);">ENDIF</span>
<div style="left:45px;top:249.5px;width:603px;height:19px;background:#f5f5f5;"></div>
<div style="left:45px;top:268.5px;width:603px;height:1.5px;background:#ffffff;"></div>
<span class="t" style="left:48.00px;top:255.70px;font-size:9.2px;color:#222;transform:scaleX(0.8713);">Data type:</span>
<div style="left:90px;top:251.5px;width:81.5px;height:16px;background:#f3f3f3;border:1px solid #cfcfcf;border-radius:1.500px;"></div>
<span class="t" style="left:97.00px;top:255.70px;font-size:9.2px;color:#444;transform:scaleX(0.8766);">V_WString</span>
<svg style="left:157px;top:258px;" width="7" height="5" viewBox="0 0 7 5"><path d="M.3 .2h6l-3 3.600z" fill="#1e8cc8"/></svg>
<span class="t" style="left:175.00px;top:255.70px;font-size:9.2px;color:#222;transform:scaleX(0.8318);">Size:</span>
<div style="left:195px;top:251.5px;width:75.8px;height:16.3px;background:#ffffff;border:1px solid #c4c4c4;border-radius:1px;"></div>
<div style="left:251px;top:252.5px;width:18.8px;height:14.3px;background:#ececec;"></div>
<span class="t" style="left:201.30px;top:255.70px;font-size:9.2px;color:#7c7c88;transform:scaleX(0.8668);">1073741823</span>
<svg style="left:257.7px;top:253px;" width="7" height="13" viewBox="0 0 7 13"><path d="M3.500 1l3 3.500h-6zM3.500 12l3-3.500h-6z" fill="#1e8cc8"/></svg>
<div style="left:21px;top:270px;width:627px;height:13.5px;background:#f5f5f5;"></div>
<div style="left:30.5px;top:270px;width:14px;height:13.5px;background:#1c8bc8;"></div>
<svg style="left:33px;top:272px;" width="9" height="9" viewBox="0 0 9 9"><path d="M4.500 1.400v6.200M1.400 4.500h6.200" stroke="#fff" stroke-width="1.500"/></svg>
<div style="left:648px;top:104px;width:3.2px;height:330px;background:#e9edf8;"></div>
<div style="left:651px;top:103px;width:2.2px;height:331px;background:#a3b7e4;"></div>
<div style="left:653.3px;top:104px;width:314px;height:24px;background:#e9edf8;"></div>
<div style="left:653.3px;top:127px;width:314px;height:1px;background:#d3d9ea;"></div>
<div style="left:744.5px;top:103.5px;width:72.5px;height:24.5px;background:#ffffff;"></div>
<div style="left:653.3px;top:128px;width:314px;height:185px;background:#ffffff;"></div>
<span class="t" style="left:658.00px;top:111.65px;font-size:9.3px;color:#3a3a3a;transform:scaleX(0.9334);">New Workflow9*</span>
<span class="t" style="left:749.00px;top:111.65px;font-size:9.3px;color:#1a1a1a;transform:scaleX(0.9571);">pivot.yxmd*</span>
<svg style="left:733px;top:111.5px;" width="8" height="8" viewBox="0 0 8 8"><path d="M1.200 1.200l5.600 5.600M6.800 1.200l-5.600 5.600" stroke="#111" stroke-width="1.150" fill="none"/></svg>
<svg style="left:807px;top:111.5px;" width="8" height="8" viewBox="0 0 8 8"><path d="M1.200 1.200l5.600 5.600M6.800 1.200l-5.600 5.600" stroke="#111" stroke-width="1.150" fill="none"/></svg>
<div style="left:821.5px;top:104.5px;width:19.5px;height:20.5px;background:#eef1fa;border:1px solid #ced6ea;border-radius:2px;"></div>
<svg style="left:826.5px;top:110px;" width="10" height="10" viewBox="0 0 10 10"><path d="M5 .8v8.400M.8 5h8.400" stroke="#56657f" stroke-width="1" fill="none"/></svg>
<svg style="left:700px;top:175px;" width="25" height="26" viewBox="0 0 25 26"><path d="M0 3q0-3 3-3h6.500l1.200 1.400h11.300q3 0 3 3v18.400q0 3-3 3h-19q-3 0-3-3z" fill="#0f9d8d"/><path d="M3.400 4.400l8.600 2.600v13.800l-8.600-2.600z" fill="#fff"/><path d="M21.600 4.400l-8.600 2.600v13.800l8.600-2.600z" fill="#fff"/><path d="M4.600 20.200l7.900 2.500 7.900-2.500" fill="none" stroke="#fff" stroke-width="1.200"/><rect x="16.500" y="8.400" width="1.800" height="1.800" fill="#0f9d8d"/><rect x="16.500" y="11.800" width="1.800" height="1.800" fill="#0f9d8d"/><rect x="16.500" y="15.200" width="1.800" height="1.800" fill="#0f9d8d"/></svg>
<div style="left:727.8px;top:184.7px;width:4.4px;height:6.6px;background:#b3d465;border-radius:1px;"></div>
<svg style="left:750.5px;top:175px;" width="26" height="26" viewBox="0 0 26 26"><path d="M0 0h25.600v25.600h-25.600l6.500-12.800z" fill="#d9654c"/></svg>
<span class="t" style="left:757.60px;top:173.30px;font-size:31px;color:#fff;font-family:'Liberation Serif', serif;transform:scaleX(0.8644);">Σ</span>
<div style="left:732.2px;top:180.3px;width:24px;height:22.4px;background:rgba(255,255,255,0.93);border:1px solid #a9a9a9;border-radius:1px;"></div>
<div style="left:733.2px;top:187.8px;width:17px;height:0.8px;background:#dbe9cf;"></div>
<span class="t" style="left:739.90px;top:182.00px;font-size:8.6px;color:#222;transform:scaleX(0.8993);">13</span>
<span class="t" style="left:735.40px;top:190.00px;font-size:8.6px;color:#222;transform:scaleX(0.9203);">143b</span>
<div style="left:779px;top:184.7px;width:4.4px;height:6.6px;background:#b3d465;border-radius:1px;"></div>
<svg style="left:801.5px;top:175.5px;" width="26" height="26" viewBox="0 0 26 26"><path d="M0 0h25.400v25.200h-25.400l5.500-12.600z" fill="#d9654c"/><g fill="#fff"><rect x="7.200" y="4.600" width="5.600" height="8.800" rx=".8"/><rect x="7.200" y="16.600" width="15.600" height="4" rx=".8"/></g><path d="M7.200 7.500h5.600M7.200 10.400h5.600M11 16.600v4M15 16.600v4M19 16.600v4" stroke="#d9654c" stroke-width=".8"/><path d="M14.800 7.200h4q1.800 0 1.800 1.800v3" fill="none" stroke="#fff" stroke-width="1.600"/><path d="M18 11.400h5.200l-2.600 3.200z" fill="#fff"/></svg>
<div style="left:783.4px;top:180.3px;width:19.4px;height:22.4px;background:rgba(255,255,255,0.93);border:1px solid #a9a9a9;border-radius:1px;"></div>
<span class="t" style="left:790.90px;top:182.00px;font-size:8.6px;color:#222;transform:scaleX(0.9203);">4</span>
<span class="t" style="left:786.60px;top:190.00px;font-size:8.6px;color:#222;transform:scaleX(0.9063);">80b</span>
<div style="left:830px;top:184.4px;width:4.4px;height:6.8px;background:#b3d465;border-radius:1px;"></div>
<div style="left:834.2px;top:180.3px;width:19.7px;height:22.4px;background:rgba(255,255,255,0.93);border:1px solid #a9a9a9;border-radius:1px;"></div>
<div style="left:835.2px;top:187.8px;width:18px;height:0.8px;background:#dbe9cf;"></div>
<span class="t" style="left:841.85px;top:182.00px;font-size:8.6px;color:#222;transform:scaleX(0.9203);">3</span>
<span class="t" style="left:837.55px;top:190.00px;font-size:8.6px;color:#222;transform:scaleX(0.9063);">69b</span>
<svg style="left:852.5px;top:166.5px;" width="44" height="41" viewBox="0 0 44 41"><rect x="1.100" y="1.100" width="42" height="38.800" fill="none" stroke="#4f9bea" stroke-width=".85" stroke-dasharray="1.700 1.500"/></svg>
<div style="left:854.2px;top:184.3px;width:4.5px;height:7.2px;background:#b3d465;"></div>
<svg style="left:889.5px;top:182.5px;" width="9" height="11" viewBox="0 0 9 11"><path d="M0 0h4.600l3.600 5.400-3.600 5.400h-4.600z" fill="#b3d465"/></svg>
<svg style="left:860px;top:174.5px;" width="28" height="28" viewBox="0 0 28 28"><circle cx="13.600" cy="13.400" r="13" fill="#19609f"/><g transform="translate(13.600,13.400)"><path d="M-2.600 -6.600h5.200v4.600C3.600 1 8.700 3.800 8.700 7C8.700 9.600 6 10.400 0 10.400C-6 10.400 -8.700 9.600 -8.700 7C-8.700 3.800 -3.600 1 -2.600 -2z" fill="#fff"/><path d="M-7.900 5.700q7.900 4.200 15.800 0l.5 1.100q-8.400 4.400-16.800 0z" fill="#19609f"/><circle cx="-1.300" cy="1.200" r="1.500" fill="none" stroke="#19609f" stroke-width=".8"/><circle cx="1.700" cy="3.200" r=".8" fill="#19609f"/><circle cx="1.100" cy="-8.300" r="1.300" fill="#fff"/><circle cx="-.9" cy="-10.300" r=".85" fill="#fff"/></g></svg>
<div style="left:853px;top:206.4px;width:72.8px;height:68px;background:#ffffff;border:1px solid #a8a8a8;"></div>
<span class="t" style="left:854.50px;top:209.15px;font-size:8.3px;color:#8c8c8c;font-weight:700;transform:scaleX(0.9541);">Shopped at = IF !</span>
<span class="t" style="left:854.50px;top:220.15px;font-size:8.3px;color:#8c8c8c;font-weight:700;transform:scaleX(0.9479);">IsNull([Store])</span>
<span class="t" style="left:854.50px;top:231.15px;font-size:8.3px;color:#8c8c8c;font-weight:700;transform:scaleX(0.9750);">AND !IsNull</span>
<span class="t" style="left:854.50px;top:241.15px;font-size:8.3px;color:#8c8c8c;font-weight:700;transform:scaleX(0.9676);">([Web])</span>
<span class="t" style="left:854.50px;top:252.15px;font-size:8.3px;color:#8c8c8c;font-weight:700;transform:scaleX(0.9195);">THEN "Both"</span>
<span class="t" style="left:854.50px;top:263.15px;font-size:8.3px;color:#8c8c8c;font-weight:700;transform:scaleX(0.9110);">ELSEIF !IsNull([...</span>
<div style="left:653.3px;top:313px;width:314px;height:2.2px;background:#a3b7e4;"></div>
<div style="left:653.3px;top:315.2px;width:314px;height:119px;background:#ffffff;"></div>
<div style="left:653.3px;top:315px;width:314px;height:22.8px;background:#e9edf8;border:1px solid #cdced2;border-right:none;border-top-color:#d9dce6;"></div>
<span class="t" style="left:658.60px;top:322.70px;font-size:9.2px;color:#6a6a6a;transform:scaleX(0.8514);">Results - Formula (4) - Output</span>
<div style="left:653.3px;top:337.7px;width:314px;height:33px;background:#f7f9fd;"></div>
<div style="left:656px;top:340px;width:20px;height:94px;background:#dfe4f1;border-radius:2.500px 2.500px 0 0;"></div>
<div style="left:658.5px;top:342.8px;width:1px;height:1px;background:#9aa0ad;"></div>
<div style="left:660.5px;top:342.8px;width:1px;height:1px;background:#9aa0ad;"></div>
<div style="left:662.5px;top:342.8px;width:1px;height:1px;background:#9aa0ad;"></div>
<div style="left:664.5px;top:342.8px;width:1px;height:1px;background:#9aa0ad;"></div>
<div style="left:666.5px;top:342.8px;width:1px;height:1px;background:#9aa0ad;"></div>
<div style="left:668.5px;top:342.8px;width:1px;height:1px;background:#9aa0ad;"></div>
<svg style="left:659px;top:349.5px;" width="14" height="15" viewBox="0 0 14 15"><g fill="none" stroke="#47566e" stroke-width="1.200"><rect x="1.100" y="1.100" width="11.400" height="3.100" rx=".7"/><rect x="1.100" y="5.600" width="11.400" height="3.100" rx=".7"/><rect x="1.100" y="10.100" width="11.400" height="3.100" rx=".7"/></g></svg>
<svg style="left:658.5px;top:369.5px;" width="15" height="15" viewBox="0 0 15 15"><path d="M1.200 1.200h12.200v3M1.200 1.200l5 6.200-5 6.200h12.200v-3" fill="none" stroke="#47566e" stroke-width="1.300"/></svg>
<div style="left:656px;top:388.5px;width:20px;height:1px;background:#e9edf6;"></div>
<div style="left:656px;top:390.2px;width:20px;height:20.8px;background:#e6eefb;border:1px solid #2f8be6;"></div>
<svg style="left:659px;top:393.5px;" width="15" height="14" viewBox="0 0 15 14"><path d="M1.200 1.200h8l4 5.500-4 5.500h-8z" fill="none" stroke="#47566e" stroke-width="1.300"/></svg>
<span class="t" style="left:685.20px;top:350.65px;font-size:9.3px;color:#1a1a1a;transform:scaleX(0.8745);-webkit-text-stroke:.2px #1a1a1a;">4 of 4 Fields</span>
<svg style="left:735px;top:354px;" width="7" height="5" viewBox="0 0 7 5"><path d="M.8 .8h5l-2.500 2.800z" fill="#222"/></svg>
<svg style="left:747px;top:350px;" width="13" height="11" viewBox="0 0 13 11"><path d="M1.600 5.600l3.400 3.400 6.400-7" fill="none" stroke="#a2a2a2" stroke-width="2.900"/></svg>
<div style="left:767.5px;top:348px;width:1px;height:13px;background:#cfcfcf;"></div>
<span class="t" style="left:777.00px;top:350.65px;font-size:9.3px;color:#1a1a1a;transform:scaleX(0.8536);-webkit-text-stroke:.2px #1a1a1a;">Cell Viewer</span>
<svg style="left:823.5px;top:354px;" width="7" height="5" viewBox="0 0 7 5"><path d="M.8 .8h5l-2.500 2.800z" fill="#222"/></svg>
<span class="t" style="left:836.50px;top:350.65px;font-size:9.3px;color:#1a1a1a;transform:scaleX(0.8868);-webkit-text-stroke:.2px #1a1a1a;">3 records displayed</span>
<div style="left:917px;top:348px;width:1px;height:13px;background:#cfcfcf;"></div>
<svg style="left:923.5px;top:349px;" width="13" height="13" viewBox="0 0 13 13"><path d="M6.500 11.500v-10M2 5.600l4.500-4.500 4.500 4.500" fill="none" stroke="#b4b4b4" stroke-width="1.400"/></svg>
<svg style="left:943.5px;top:349px;" width="13" height="13" viewBox="0 0 13 13"><path d="M6.500 1.500v10M2 7.400l4.500 4.500 4.500-4.500" fill="none" stroke="#b4b4b4" stroke-width="1.400"/></svg>
<div style="left:964.5px;top:348px;width:1px;height:13px;background:#cfcfcf;"></div>
<div style="left:676.4px;top:371px;width:278.1px;height:12.6px;background:#e9edf8;"></div>
<div style="left:676.4px;top:383.6px;width:49.60000000000002px;height:37.8px;background:#e9edf8;"></div>
<div style="left:676.4px;top:370.5px;width:278.6px;height:1px;background:#d9dff0;"></div>
<div style="left:676.4px;top:383.1px;width:278.6px;height:1px;background:#d9dff0;"></div>
<div style="left:676.4px;top:395.7px;width:278.6px;height:1px;background:#d9dff0;"></div>
<div style="left:676.4px;top:408.3px;width:278.6px;height:1px;background:#d9dff0;"></div>
<div style="left:676.4px;top:420.9px;width:278.6px;height:1px;background:#d9dff0;"></div>
<div style="left:675.9px;top:371px;width:1px;height:50.4px;background:#d9dff0;"></div>
<div style="left:725.5px;top:371px;width:1px;height:50.4px;background:#d9dff0;"></div>
<div style="left:791.0px;top:371px;width:1px;height:50.4px;background:#d9dff0;"></div>
<div style="left:837.8px;top:371px;width:1px;height:50.4px;background:#d9dff0;"></div>
<div style="left:883.8px;top:371px;width:1px;height:50.4px;background:#d9dff0;"></div>
<div style="left:954.0px;top:371px;width:1px;height:50.4px;background:#d9dff0;"></div>
<div style="left:726px;top:382.40000000000003px;width:65.5px;height:1.2px;background:#86de72;"></div>
<div style="left:791.5px;top:382.40000000000003px;width:46.799999999999955px;height:1.2px;background:#86de72;"></div>
<div style="left:792.0px;top:382.40000000000003px;width:15px;height:1.2px;background:#f5c04a;"></div>
<div style="left:838.3px;top:382.40000000000003px;width:46.0px;height:1.2px;background:#86de72;"></div>
<div style="left:838.8px;top:382.40000000000003px;width:14px;height:1.2px;background:#f5c04a;"></div>
<div style="left:884.3px;top:382.40000000000003px;width:70.20000000000005px;height:1.2px;background:#86de72;"></div>
<span class="t" style="left:679.20px;top:372.80px;font-size:9px;color:#111;font-weight:700;transform:scaleX(0.8157);">Record</span>
<span class="t" style="left:729.50px;top:372.80px;font-size:9px;color:#111;font-weight:700;transform:scaleX(0.8060);">Cust no</span>
<span class="t" style="left:794.60px;top:372.80px;font-size:9px;color:#111;font-weight:700;transform:scaleX(0.8255);">Store</span>
<span class="t" style="left:841.90px;top:372.80px;font-size:9px;color:#111;font-weight:700;transform:scaleX(0.8013);">Web</span>
<span class="t" style="left:887.70px;top:372.80px;font-size:9px;color:#111;font-weight:700;transform:scaleX(0.8755);">Shopped at</span>
<span class="t" style="left:718.00px;top:386.80px;font-size:9px;color:#2e2e2e;transform:scaleX(0.8374);">1</span>
<span class="t" style="left:729.70px;top:386.80px;font-size:9px;color:#2e2e2e;transform:scaleX(0.8087);">1234</span>
<span class="t" style="left:794.80px;top:386.80px;font-size:9px;color:#2e2e2e;transform:scaleX(0.8374);">1</span>
<span class="t" style="left:842.00px;top:386.80px;font-size:9px;color:#a3a9b3;transform:scaleX(0.8823);">[Null]</span>
<span class="t" style="left:887.80px;top:386.80px;font-size:9px;color:#2e2e2e;transform:scaleX(0.8784);">Store</span>
<span class="t" style="left:718.00px;top:399.80px;font-size:9px;color:#2e2e2e;transform:scaleX(0.8374);">2</span>
<span class="t" style="left:729.70px;top:399.80px;font-size:9px;color:#2e2e2e;transform:scaleX(0.8154);">123456</span>
<span class="t" style="left:794.80px;top:399.80px;font-size:9px;color:#a3a9b3;transform:scaleX(0.8823);">[Null]</span>
<span class="t" style="left:842.00px;top:399.80px;font-size:9px;color:#2e2e2e;transform:scaleX(0.8374);">5</span>
<span class="t" style="left:887.80px;top:399.80px;font-size:9px;color:#2e2e2e;transform:scaleX(0.8613);">Web</span>
<span class="t" style="left:718.00px;top:411.80px;font-size:9px;color:#2e2e2e;transform:scaleX(0.8374);">3</span>
<span class="t" style="left:729.70px;top:411.80px;font-size:9px;color:#2e2e2e;transform:scaleX(0.8300);">123456789</span>
<span class="t" style="left:794.80px;top:411.80px;font-size:9px;color:#2e2e2e;transform:scaleX(0.8374);">5</span>
<span class="t" style="left:842.00px;top:411.80px;font-size:9px;color:#2e2e2e;transform:scaleX(0.8374);">2</span>
<span class="t" style="left:887.80px;top:411.80px;font-size:9px;color:#2e2e2e;transform:scaleX(0.8911);">Both</span>
</div></body></html>
